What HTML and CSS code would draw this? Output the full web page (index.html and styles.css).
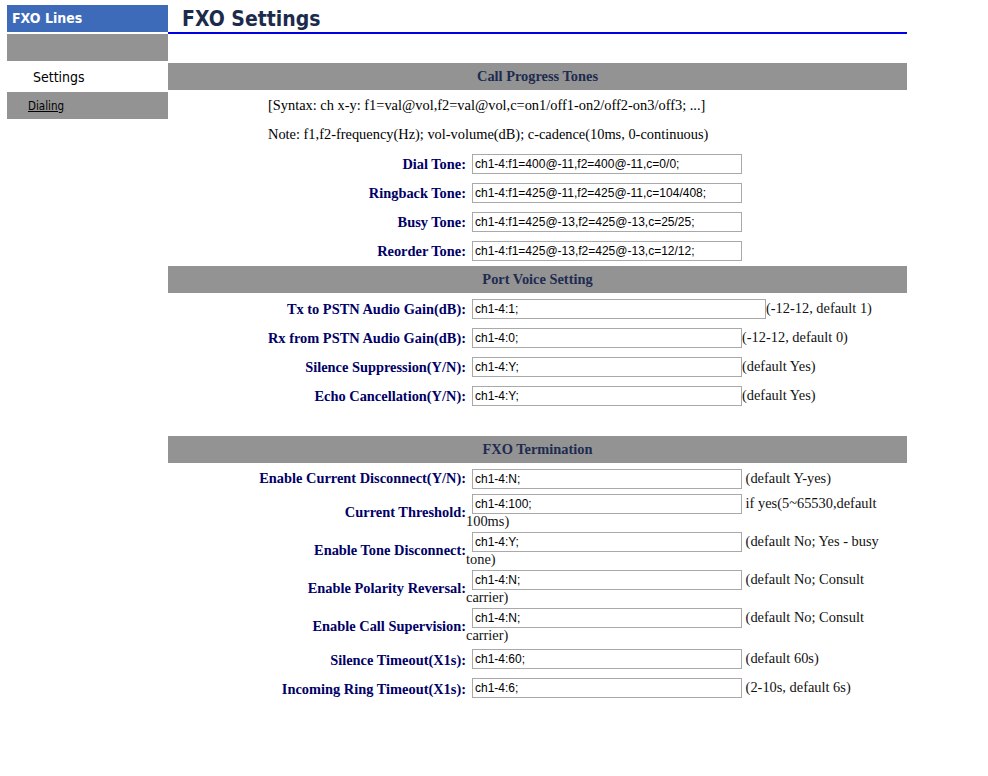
FILE: index.html
```html
<!DOCTYPE html>
<html>
<head>
<meta charset="utf-8">
<title>FXO Settings</title>
<link rel="stylesheet" href="styles.css">
</head>
<body>
<div class="page">
  <div class="sidebar">
    <div class="side-head">FXO Lines</div>
    <div class="side-blank"></div>
    <div class="side-item">Settings</div>
    <div class="side-link"><a href="#">Dialing</a></div>
  </div>
  <div class="main">
    <div class="title">FXO Settings</div>

    <div class="bar bar-first">Call Progress Tones</div>
    <div class="rows">
      <div class="note">[Syntax: ch x-y: f1=val@vol,f2=val@vol,c=on1/off1-on2/off2-on3/off3; ...]</div>
      <div class="note">Note: f1,f2-frequency(Hz); vol-volume(dB); c-cadence(10ms, 0-continuous)</div>
      <div class="row"><div class="label">Dial Tone:</div><div class="value"><input class="field" type="text" value="ch1-4:f1=400@-11,f2=400@-11,c=0/0;"></div></div>
      <div class="row"><div class="label">Ringback Tone:</div><div class="value"><input class="field" type="text" value="ch1-4:f1=425@-11,f2=425@-11,c=104/408;"></div></div>
      <div class="row"><div class="label">Busy Tone:</div><div class="value"><input class="field" type="text" value="ch1-4:f1=425@-13,f2=425@-13,c=25/25;"></div></div>
      <div class="row"><div class="label">Reorder Tone:</div><div class="value"><input class="field" type="text" value="ch1-4:f1=425@-13,f2=425@-13,c=12/12;"></div></div>
    </div>

    <div class="bar bar-second">Port Voice Setting</div>
    <div class="rows">
      <div class="row"><div class="label">Tx to PSTN Audio Gain(dB):</div><div class="value"><input class="field field-wide" type="text" value="ch1-4:1;">(-12-12, default 1)</div></div>
      <div class="row"><div class="label">Rx from PSTN Audio Gain(dB):</div><div class="value"><input class="field" type="text" value="ch1-4:0;">(-12-12, default 0)</div></div>
      <div class="row"><div class="label">Silence Suppression(Y/N):</div><div class="value"><input class="field" type="text" value="ch1-4:Y;">(default Yes)</div></div>
      <div class="row"><div class="label">Echo Cancellation(Y/N):</div><div class="value"><input class="field" type="text" value="ch1-4:Y;">(default Yes)</div></div>
    </div>

    <div class="bar bar-third">FXO Termination</div>
    <div class="rows rows-tight">
      <div class="row h25"><div class="label">Enable Current Disconnect(Y/N):</div><div class="value"><input class="field" type="text" value="ch1-4:N;"> (default Y-yes)</div></div>
      <div class="row h38"><div class="label">Current Threshold:</div><div class="value"><input class="field" type="text" value="ch1-4:100;"> if yes(5~65530,default 100ms)</div></div>
      <div class="row h38"><div class="label">Enable Tone Disconnect:</div><div class="value"><input class="field" type="text" value="ch1-4:Y;"> (default No; Yes - busy tone)</div></div>
      <div class="row h38"><div class="label">Enable Polarity Reversal:</div><div class="value"><input class="field" type="text" value="ch1-4:N;"> (default No; Consult carrier)</div></div>
      <div class="row h41"><div class="label">Enable Call Supervision:</div><div class="value"><input class="field" type="text" value="ch1-4:N;"> (default No; Consult carrier)</div></div>
      <div class="row h29"><div class="label">Silence Timeout(X1s):</div><div class="value"><input class="field" type="text" value="ch1-4:60;"> (default 60s)</div></div>
      <div class="row h29"><div class="label">Incoming Ring Timeout(X1s):</div><div class="value"><input class="field" type="text" value="ch1-4:6;"> (2-10s, default 6s)</div></div>
    </div>
  </div>
</div>
</body>
</html>
```
FILE: styles.css
```css
html, body {
  margin: 0;
  padding: 0;
  background: #ffffff;
}

.page {
  display: flex;
  align-items: flex-start;
  padding: 5px 0 0 7px;
}

.sidebar {
  width: 161px;
  flex: none;
  font-family: "DejaVu Sans Condensed", "DejaVu Sans", sans-serif;
  font-stretch: condensed;
}

.side-head {
  height: 27px;
  line-height: 27px;
  background: #3d6bb9;
  color: #ffffff;
  font-weight: bold;
  font-size: 14px;
  padding-left: 5px;
}

.side-blank {
  margin-top: 2px;
  height: 27px;
  background: #939393;
}

.side-item {
  height: 31px;
  line-height: 32px;
  padding-left: 26px;
  font-size: 14px;
  color: #000000;
  background: #ffffff;
}

.side-link {
  height: 27px;
  line-height: 28px;
  padding-left: 21px;
  background: #939393;
  font-size: 11.5px;
}

.side-link a {
  color: #000000;
  text-decoration: underline;
}

.main {
  width: 739px;
  flex: none;
  font-family: "Liberation Serif", "Times New Roman", serif;
  font-size: 14.4px;
  color: #000000;
}

.title {
  height: 26px;
  padding-top: 1px;
  line-height: 26px;
  padding-left: 14px;
  border-bottom: 2px solid #0000e6;
  font-family: "DejaVu Sans Condensed", "DejaVu Sans", sans-serif;
  font-stretch: condensed;
  font-weight: bold;
  font-size: 21px;
  color: #1c2b4b;
}

.bar {
  height: 27px;
  line-height: 27px;
  background: #939393;
  text-align: center;
  font-weight: bold;
  color: #1e2b50;
}

.bar-first { margin-top: 29px; }
.bar-second { margin-top: 2px; }
.bar-third { margin-top: 27px; }

.rows {
  display: flex;
  flex-direction: column;
  gap: 2px;
  padding-top: 2px;
}

.rows-tight {
  gap: 0;
}

.note {
  height: 27px;
  line-height: 27px;
  padding-left: 100px;
}

.row {
  display: flex;
  height: 27px;
}

.row.h25 { height: 25px; }
.row.h38 { height: 38px; }
.row.h41 { height: 41px; }
.row.h29 { height: 29px; }

.label {
  width: 298px;
  flex: none;
  align-self: center;
  text-align: right;
  font-weight: bold;
  color: #000066;
  line-height: 18px;
}

.row.h38 .label { padding-top: 5px; }
.row.h41 .label { padding-top: 2px; }

.value {
  width: 434px;
  flex: none;
  padding-top: 4px;
  line-height: 15px;
  color: #111111;
}

.field {
  box-sizing: border-box;
  width: 270px;
  height: 20px;
  margin: 0 0 0 6px;
  padding: 0 2px;
  border: 1px solid #a9a9a9;
  font-family: "Liberation Sans", Arial, sans-serif;
  font-size: 12px;
  color: #000000;
  background: #ffffff;
  vertical-align: baseline;
}

.field-wide {
  width: 294px;
}
```
